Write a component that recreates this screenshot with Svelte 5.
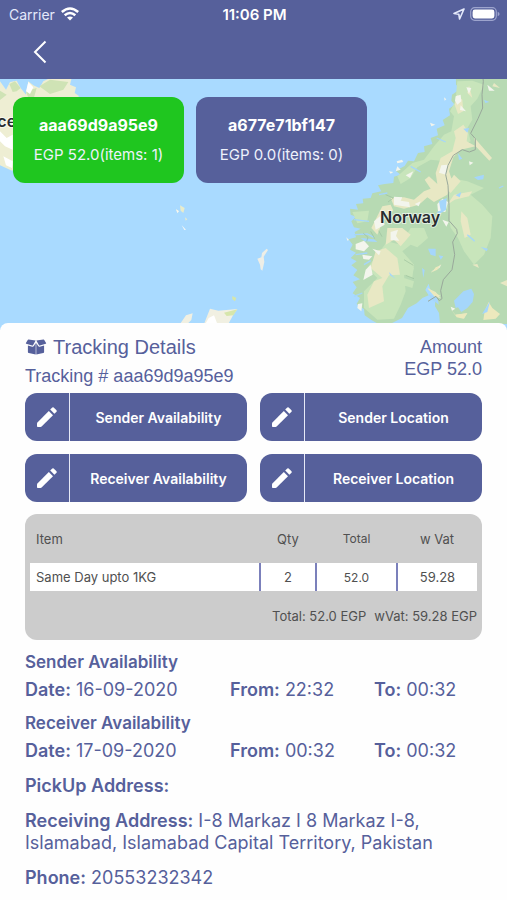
<script>
    const parcels = [
        { id: 'aaa69d9a95e9', total: '52.0', items: 1 },
        { id: 'a677e71bf147', total: '0.0', items: 0 }
    ];
    const actions = ['Sender Availability', 'Sender Location', 'Receiver Availability', 'Receiver Location'];
    const rows = [{ item: 'Same Day upto 1KG', qty: 2, total: '52.0', vat: '59.28' }];
    const slots = [
        { title: 'Sender Availability', date: '16-09-2020', from: '22:32', to: '00:32' },
        { title: 'Receiver Availability', date: '17-09-2020', from: '00:32', to: '00:32' }
    ];

    let current = $state(0);
</script>

<header>
    <div class="status">
        <div class="carrier">
            <span>Carrier</span>
            <svg width="18" height="14" viewBox="0 0 18 14" fill="none" stroke="#fff" stroke-width="2.6">
                <path d="M.8 5Q9-2 17.2 5" />
                <path d="M3.7 8.3Q9 3.7 14.3 8.3" />
                <path d="M9 13.6 6 10.6Q9 8.2 12 10.6Z" fill="#fff" stroke="none" />
            </svg>
        </div>
        <b>11:06 PM</b>
        <div class="power">
            <svg width="12" height="12" viewBox="0 0 12 12" fill="none" stroke="#e4e9fb" stroke-width="1.6" stroke-linejoin="round">
                <path d="M11 1 1 5.5 5.8 6.2 6.6 11Z" />
            </svg>
            <svg width="30" height="14" viewBox="0 0 30 14">
                <rect x=".7" y=".7" width="25.6" height="12.6" rx="4" fill="none" stroke="#9da4cd" stroke-width="1.2" />
                <rect x="2.6" y="2.6" width="21.8" height="8.8" rx="2.3" fill="#fff" />
                <path d="M27.7 4.8Q29.6 5.5 29.6 7T27.7 9.2Z" fill="#9da4cd" />
            </svg>
        </div>
    </div>
    <button class="back" aria-label="Back">
        <svg width="14" height="24" viewBox="0 0 14 24" fill="none" stroke="#fff" stroke-width="2">
            <path d="M12.5 1.5 2 12 12.5 22.5" />
        </svg>
    </button>
</header>

<section class="map">
    <svg class="land" viewBox="0 3 1521 735" preserveAspectRatio="xMidYMid slice">
        <rect y="-200" width="1521" height="1200" fill="#a9daff" />
        <!-- Iceland -->
        <path d="M0 10 18 35 30 12 50 8 62 30 78 50 85 10 100 22 118 30 130 10 150 0H215L210 20 228 28 224 45 238 55 215 66 225 120 150 230 60 265 36 278 0 262Z" fill="#eeeed3" />
        <path d="M28 18 45 10 62 30 50 40 38 42ZM78 40 110 30 100 65 85 60ZM118 25 150 5 205 12 190 35 150 48ZM0 38 20 50 0 66Z" fill="#cfe3b5" />
        <path d="M0 160 20 180 38 170V215L15 205 0 190ZM10 235 38 250 36 270 18 262ZM85 12 100 28 90 48 78 40Z" fill="#fff" />
        <!-- Faroe, Shetland and Scotland -->
        <path d="M540 382 554 390 550 405 542 398ZM528 394 536 398 533 406ZM555 418 562 424 557 428Z" fill="#e9eccb" />
        <path d="M545 442 558 455 553 456ZM528 394 537 400 532 405Z" fill="#f8f8f3" />
        <path d="M540 738 558 712 578 706 574 726 562 738ZM612 738 630 692 655 698 712 693 700 710 685 738Z" fill="#f1f0e2" />
        <path d="M672 704 712 694 700 712 680 714ZM697 654 709 660 705 670 697 664Z" fill="#d6e6ab" />
        <path d="M626 720 642 712 652 738H616Z" fill="#fff" />
        <g transform="translate(762 0)">
            <path d="M10 542 22 538 24 525 38 512 42 516 29 536 31 552 25 578 20 574 18 560Z" fill="#eeeee6" />
            <!-- Scandinavia -->
            <path d="M603 -150 606 20 620 32 594 50 592 68 602 80 585 92 588 112 566 126 572 142 548 152 552 172 530 180 535 198 510 205 512 222 492 225 480 250 462 248 452 264 425 278 440 290 420 296 418 315 392 318 372 322 382 340 355 346 350 360 326 362 328 376 306 378 312 395 288 392 290 410 306 416 292 430 300 448 320 452 302 462 306 478 284 484 296 500 288 515 306 524 290 540 308 550 292 562 310 576 298 592 318 604 296 612 308 628 296 646 318 660 308 678 330 694 332 712 352 726 372 737H410L444 720 462 690 488 676 505 660 524 652 514 636 524 617 530 640 544 655 543 685 555 705 558 738 559 1000H760V-150Z" fill="#b7dab3" />
            <path d="M610 10 655 8 690 20 670 62 650 85 655 125 640 150 650 190 600 210 590 230 560 248 530 245 490 268 470 300 440 318 430 295 475 255 510 245 540 205 570 170 592 160 600 115 588 100 604 70ZM590 300 640 310 690 330 650 350 685 380 715 415 710 480 690 530 660 560 630 520 612 480 590 450 580 390ZM400 490 440 500 470 450 510 450 522 480 490 508 470 500 445 520 480 560 475 600 450 590 455 640 440 680 420 722 370 725 330 690 330 640 370 600 340 570ZM295 402 345 398 340 430 310 436ZM440 530 480 570 475 590 440 560ZM450 600 480 610 475 630 448 622Z" fill="#c8e5bb" />
            <path d="M610 50 625 65 628 100 612 108 602 80ZM628 140 642 160 638 190 665 205 620 215 598 238 585 280 595 310 580 350 540 372 520 358 495 380 450 392 420 385 410 360 450 358 480 365 510 340 530 332 512 305 525 295 550 318 545 285 560 240 595 220 605 180 600 160ZM600 290 620 310 590 345 575 330ZM580 380 600 350 655 340 645 355 602 365ZM622 400 640 420 650 470 632 480 620 430ZM385 385 410 380 418 398 392 415 370 470 352 450ZM365 520 395 510 430 540 438 590 405 592 385 625 390 670 345 690 340 650 360 610 385 600 350 570ZM400 450 445 450 470 470 440 505 420 485 395 500ZM645 22 655 60 640 45ZM660 178 714 240 706 248 665 205ZM720 15 738 30 715 25ZM520 630 545 642 560 660 545 658ZM605 710 640 705 630 722ZM738 615 759 606V625ZM655 560 670 558 675 570Z" fill="#e8e8c4" />
            <path d="M570 58 577 64 572 68ZM528 134 544 140 532 145ZM428 250 444 245 448 252 430 256ZM405 280 418 282 410 287ZM430 265 440 275 425 280ZM605 55 620 50 622 70 610 80 603 68ZM637 28 652 30 645 48ZM562 262 580 260 576 290 555 284ZM550 378 565 362 582 372 574 402 552 400ZM420 356 445 358 440 368 465 372 468 388 420 380ZM360 430 378 415 392 440 365 455ZM305 498 330 488 345 505 330 520 305 514ZM325 530 355 535 345 545 328 543ZM335 575 350 560 356 590 328 606ZM312 678 325 676 322 700 310 690ZM410 462 432 455 426 474 436 488 410 486ZM355 512 380 520 375 532ZM277 478 285 486 280 488ZM455 292 478 280 468 300ZM620 82 636 100 618 96ZM645 250 658 254 647 262ZM590 686 604 692 594 698ZM700 20 722 38 705 38ZM565 425 584 432 577 446ZM482 378 500 370 494 385ZM530 582 562 560 556 570Z" fill="#f3f5ed" />
            <path d="M692 700 704 672 715 690 738 708 725 722 688 726ZM590 692 604 710 640 706 628 722 608 718ZM520 630 560 654 542 656ZM530 584 562 558 550 575ZM535 582 545 568 560 562Z" fill="#ece9bd" />
            <path d="M600 668 628 640 652 632 660 648 656 672 640 690 622 702 612 688 605 690ZM555 370 578 360 576 395 562 405 558 388ZM522 512 545 512 545 535 530 530ZM628 152 646 150 640 164ZM612 226 625 242 615 246ZM660 298 690 290 688 304 672 306ZM320 480 360 484 370 492 332 490ZM405 582 425 602 408 592ZM680 507 702 512 698 520ZM548 402 565 396 558 410ZM605 352 622 342 617 358ZM504 570 512 576 508 600ZM684 708 708 670 700 702ZM690 65 706 72 694 75ZM554 532 568 535 560 545ZM524 648 550 660 555 680 532 664Z" fill="#a5d6fb" />
            <g fill="none" stroke="#a5d6fb" stroke-width="4">
                <path d="M300 425 345 430M300 470 340 468 360 478M305 530 340 525M330 560 350 548M300 655 325 645M400 345 375 350M470 265 500 282M548 180 575 192M640 470 662 490M735 330 748 324" />
            </g>
            <g fill="none" stroke="#9bbf9b" stroke-width="2">
                <path d="M395 350 418 360 402 372M328 466 342 478 338 490M350 460 362 482M374 458 384 476M450 545 478 562M455 592 480 602" />
            </g>
            <path d="M680 -60 688 10 684 50 686 90 672 122 650 166 664 182 664 215 646 222 625 215 598 232 582 262 575 290 582 322 585 382 585 428 608 454 610 466 596 492 602 530 594 575 568 605 560 638 564 662 556 668 546 655 522 670" fill="none" stroke="#99a89b" stroke-width="3" />
        </g>
        <g class="places">
            <text x="1140" y="436">Norway</text>
            <text x="-8" y="147">ce</text>
        </g>
    </svg>
    <div class="parcels">
        {#each parcels as parcel, i}
            <button class="parcel" class:active={current === i} onclick={() => (current = i)}>
                <b>{parcel.id}</b>
                <span>EGP {parcel.total}(items: {parcel.items})</span>
            </button>
        {/each}
    </div>
</section>

<main>
    <div class="summary">
        <div>
            <h1>
                <svg width="22" height="16" viewBox="0 0 22 17" fill="#56609b">
                    <path d="M3 .6 10.6 1.6 7.8 6.6Q7.5 7.1 6.9 6.9L.6 5.1Q0 4.9.3 4.3L2.2 1Q2.5.5 3 .6Z" />
                    <path d="M19 .6 11.4 1.6 14.2 6.6Q14.5 7.1 15.1 6.9L21.4 5.1Q22 4.9 21.7 4.3L19.8 1Q19.5.5 19 .6Z" />
                    <path d="M2.4 6.9 7 8.2Q8.2 8.4 8.9 7.3L10.7 4.3V16.6L3.3 14.8Q2.4 14.6 2.4 13.7Z" />
                    <path d="M19.6 6.9 15 8.2Q13.8 8.4 13.1 7.3L11.3 4.3V16.6L18.7 14.8Q19.6 14.6 19.6 13.7Z" />
                </svg>
                Tracking Details
            </h1>
            <p>Tracking # {parcels[0].id}</p>
        </div>
        <div class="amount">
            <p>Amount</p>
            <p>EGP 52.0</p>
        </div>
    </div>

    <div class="actions">
        {#each actions as action}
            <button class="action">
                <span class="pen">
                    <svg width="20" height="20" viewBox="0 0 20 20" fill="#fff">
                        <path d="M0 16.4Q0 15.8.4 15.4L11.8 4 16 8.2 4.6 19.6Q4.2 20 3.6 20H.8Q0 20 0 19.2Z" />
                        <path d="M13.2 2.6 15.3.5Q16 0 16.7.5L19.5 3.3Q20 4 19.5 4.7L17.4 6.8Z" />
                    </svg>
                </span>
                <span class="label">{action}</span>
            </button>
        {/each}
    </div>

    <div class="items">
        <table>
            <thead>
                <tr>
                    <th class="item">Item</th>
                    <th class="qty">Qty</th>
                    <th class="total">Total</th>
                    <th class="vat">w Vat</th>
                </tr>
            </thead>
            <tbody>
                {#each rows as row}
                    <tr>
                        <td class="item">{row.item}</td>
                        <td>{row.qty}</td>
                        <td class="total">{row.total}</td>
                        <td>{row.vat}</td>
                    </tr>
                {/each}
            </tbody>
            <tfoot>
                <tr>
                    <td colspan="4"><span>Total: 52.0 EGP</span><span>wVat: 59.28 EGP</span></td>
                </tr>
            </tfoot>
        </table>
    </div>

    {#each slots as slot}
        <section class="slot">
            <h2>{slot.title}</h2>
            <div class="times">
                <span><b>Date:</b> {slot.date}</span>
                <span><b>From:</b> {slot.from}</span>
                <span><b>To:</b> {slot.to}</span>
            </div>
        </section>
    {/each}

    <p class="info"><b>PickUp Address:</b></p>
    <p class="info"><b>Receiving Address:</b> I-8 Markaz I 8 Markaz I-8, Islamabad, Islamabad Capital Territory, Pakistan</p>
    <p class="info"><b>Phone:</b> 20553232342</p>
</main>

<style>
    :global(body) {
        background: #fefefe;
        font-family: Inter, Roboto, sans-serif;
        color: #56609b;
    }
    h1, h2, p {
        margin: 0;
    }
    svg {
        display: block;
        flex: none;
    }
    button {
        padding: 0;
        border: 0;
        font: inherit;
        color: #fff;
        cursor: pointer;
    }
    header {
        background: #56609b;
        color: #fff;
    }
    .status {
        display: grid;
        grid-template-columns: 1fr auto 1fr;
        align-items: center;
        height: 28px;
        padding: 0 7px 0 9px;
        font-size: 14px;
    }
    .status b {
        font-size: 15px;
        font-weight: 600;
    }
    .carrier, .power {
        display: flex;
        align-items: center;
        gap: 6px;
    }
    .carrier {
        color: #e4e9fb;
    }
    .power {
        justify-content: flex-end;
        gap: 5px;
    }
    .back {
        display: flex;
        align-items: center;
        height: 51px;
        padding: 0 33px 3px;
        background: none;
    }
    .map {
        position: relative;
        height: 251px;
        overflow: hidden;
        background: #a9daff;
    }
    .land {
        width: 100%;
        height: 245px;
    }
    .places text {
        font-size: 48px;
        font-weight: 600;
        fill: #282c30;
        stroke: #fff;
        stroke-width: 6px;
        stroke-opacity: 0.6;
        paint-order: stroke;
    }
    .parcels {
        position: absolute;
        top: 18px;
        left: 13px;
        display: flex;
        gap: 12px;
    }
    .parcel {
        display: flex;
        flex-direction: column;
        align-items: center;
        justify-content: center;
        gap: 12px;
        width: 171px;
        height: 86px;
        border-radius: 12px;
        background: #56609b;
        font-size: 15px;
        line-height: 18px;
    }
    .parcel b {
        font-size: 16px;
        font-weight: 700;
    }
    .parcel span {
        color: #eef2fc;
    }
    .parcel.active {
        background: #1fc61f;
    }
    main {
        position: relative;
        margin-top: -7px;
        padding: 12px 25px;
        border-radius: 8px 8px 0 0;
        background: #fefefe;
    }
    .summary {
        display: flex;
        justify-content: space-between;
        font: 18px/22px "Liberation Sans", Arial, sans-serif;
    }
    h1 {
        display: flex;
        align-items: center;
        gap: 6px;
        margin-bottom: 6px;
        font-size: 20px;
        font-weight: 400;
        line-height: 24px;
    }
    .amount {
        padding-top: 1px;
        text-align: right;
    }
    .actions {
        display: grid;
        grid-template-columns: 1fr 1fr;
        gap: 13px;
        margin: 6px 0 12px;
    }
    .action {
        display: flex;
        height: 48px;
        border-radius: 12px;
        background: #56609b;
        font-size: 14px;
        font-weight: 600;
    }
    .pen {
        display: flex;
        align-items: center;
        justify-content: center;
        width: 44px;
        height: 100%;
        border-right: 1px solid #e6e9f6;
    }
    .label {
        flex: 1;
        align-self: center;
    }
    .items {
        padding: 0 5px;
        border-radius: 12px;
        background: #ccc;
        color: #505050;
        font-size: 13px;
    }
    table {
        width: 100%;
        border-collapse: collapse;
        table-layout: fixed;
    }
    th, td {
        padding: 0;
        font-weight: 400;
        text-align: center;
    }
    th {
        height: 49px;
    }
    .qty {
        width: 56px;
    }
    .total {
        width: 81px;
        font-size: 12px;
    }
    .vat {
        width: 80px;
    }
    .item {
        padding-left: 6px;
        text-align: left;
    }
    tbody td {
        height: 28px;
        background: #fff;
    }
    tbody td + td {
        border-left: 2px solid #7b80bb;
    }
    tfoot td {
        height: 49px;
        text-align: right;
    }
    tfoot span + span {
        margin-left: 8px;
    }
    .slot {
        margin-top: 12px;
        font-size: 18px;
    }
    h2 {
        font-size: 17px;
        font-weight: 600;
        line-height: 21px;
    }
    .times {
        display: grid;
        grid-template-columns: 205fr 144fr 108fr;
        margin-top: 6px;
        line-height: 22px;
    }
    .slot b, .info b {
        font-weight: 600;
    }
    .info {
        margin-top: 13px;
        font-size: 18px;
        line-height: 22px;
    }
</style>
